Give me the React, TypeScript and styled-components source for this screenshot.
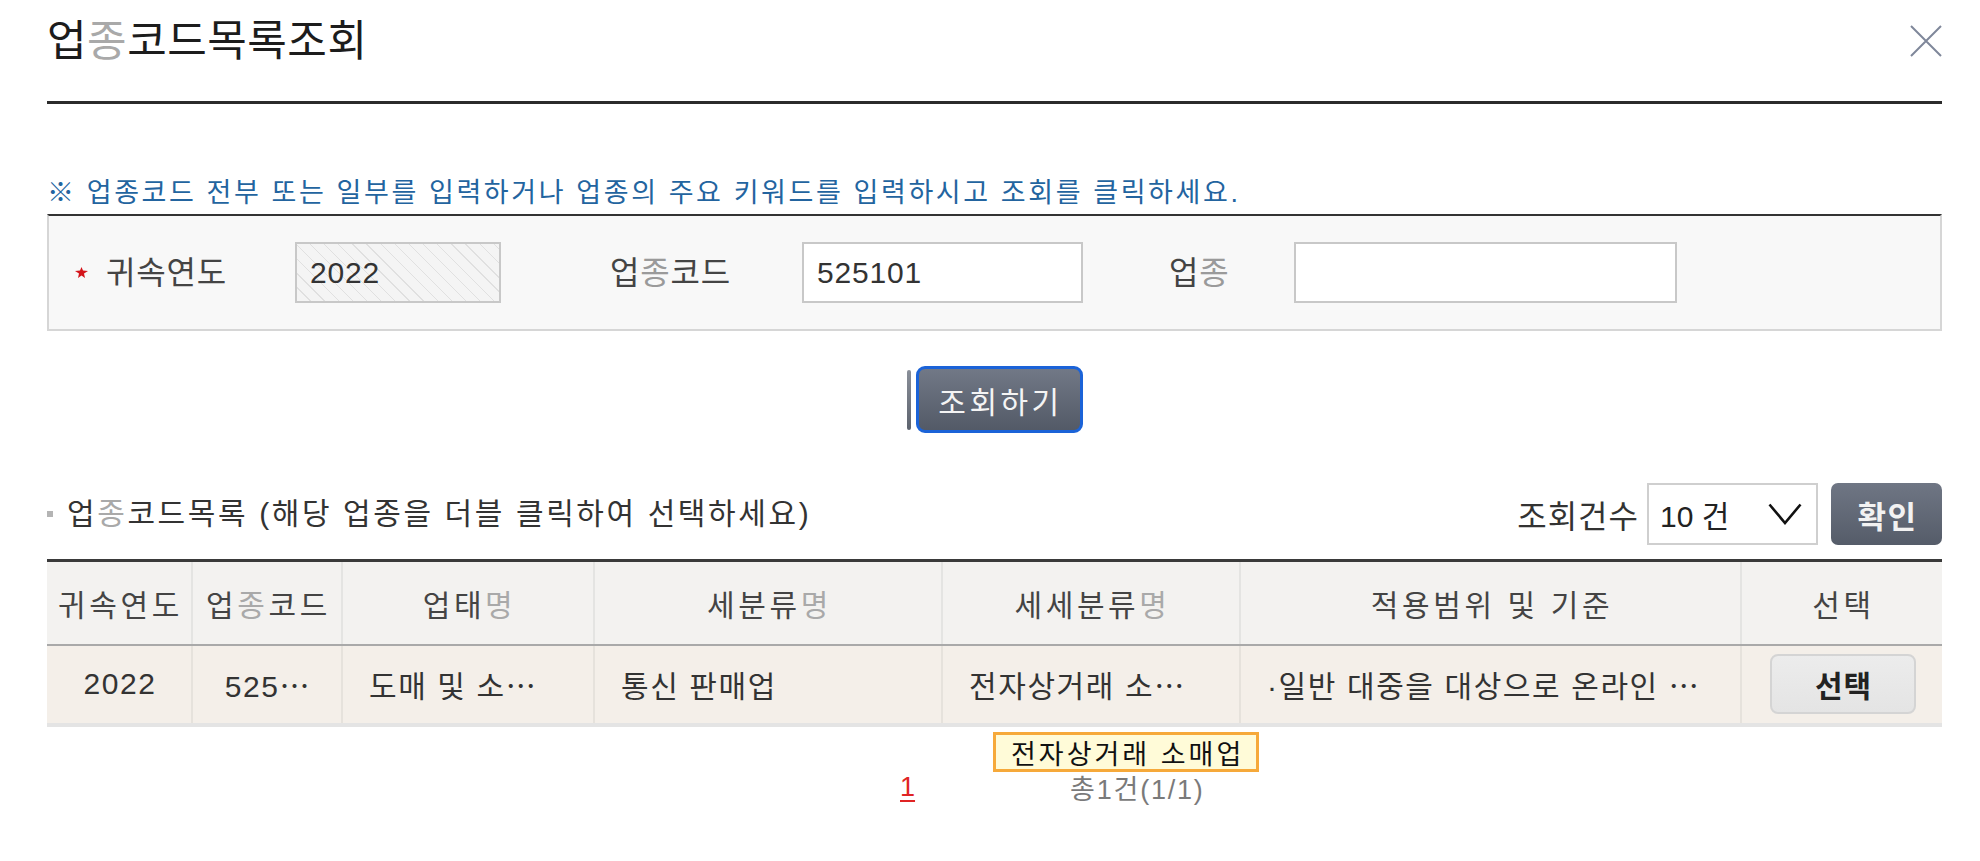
import React from "react";
import styled, { createGlobalStyle } from "styled-components";

const GlobalStyle = createGlobalStyle`
  html, body { margin: 0; padding: 0; background: #ffffff; }
  body {
    font-family: "Liberation Sans", "Noto Sans CJK KR", sans-serif;
    color: #333333;
  }
  * { box-sizing: border-box; }
`;

const Page = styled.div`
  width: 1895px;
  margin-left: 47px;
`;

const Header = styled.header`
  display: flex;
  justify-content: space-between;
  align-items: flex-start;
  height: 104px;
  padding-top: 16px;
  border-bottom: 3px solid #2b2b2b;
`;

const Title = styled.h1`
  margin: 0;
  font-size: 43px;
  line-height: 50px;
  font-weight: 400;
  letter-spacing: 0.5px;
  color: #1c1c1c;
`;

const Dim = styled.span<{ $tone?: string }>`
  color: ${(p) => p.$tone || "#a9a9a9"};
`;

const CloseButton = styled.button`
  display: flex;
  margin-top: 9px;
  padding: 0;
  border: 0;
  background: none;
  width: 32px;
  height: 32px;
  cursor: pointer;
`;

const Notice = styled.p`
  margin: 73px 0 5px;
  font-size: 27px;
  line-height: 32px;
  letter-spacing: 2.6px;
  color: #23649f;
  white-space: nowrap;
`;

const SearchBox = styled.div`
  display: flex;
  align-items: center;
  height: 117px;
  padding-left: 26px;
  background: #f8f8f8;
  border: 2px solid #d6d6d6;
  border-top: 2px solid #333333;
`;

const Star = styled.svg`
  flex: none;
  width: 13px;
  height: 11px;
  margin-right: 18px;
`;

const FieldLabel = styled.label<{ $w: number; $ml?: number }>`
  flex: none;
  width: ${(p) => p.$w}px;
  margin-left: ${(p) => p.$ml || 0}px;
  font-size: 32px;
  line-height: 40px;
  letter-spacing: 0.8px;
  color: #444444;
  white-space: nowrap;
`;

const TextInput = styled.input<{ $w: number; $locked?: boolean }>`
  flex: none;
  width: ${(p) => p.$w}px;
  height: 61px;
  padding: 0 0 0 13px;
  border: 2px solid #c8c8c8;
  font-family: "Liberation Sans", "Noto Sans CJK KR", sans-serif;
  font-size: 30px;
  letter-spacing: 0.8px;
  color: #333333;
  outline: none;
  background: ${(p) =>
    p.$locked
      ? "repeating-linear-gradient(45deg, #f4f4f4 0px, #f4f4f4 9px, #e0e0e0 9px, #e0e0e0 10px)"
      : "#ffffff"};
`;

const ButtonRow = styled.div`
  display: flex;
  justify-content: center;
  align-items: center;
  gap: 5px;
  margin-top: 35px;
  height: 67px;
`;

const Sliver = styled.span`
  width: 4px;
  height: 60px;
  border-radius: 2px;
  background: linear-gradient(#8a8f99, #5d636e);
`;

const PrimaryButton = styled.button`
  width: 167px;
  height: 67px;
  padding: 0 0 0 3px;
  border: 3px solid #1b63d8;
  border-radius: 9px;
  background: linear-gradient(#717886, #535a67);
  color: #f4f4f4;
  font-family: "Liberation Sans", "Noto Sans CJK KR", sans-serif;
  font-size: 30px;
  letter-spacing: 3.5px;
  cursor: pointer;
`;

const ListBar = styled.div`
  display: flex;
  justify-content: space-between;
  align-items: center;
  height: 62px;
  margin-top: 50px;
`;

const SectionTitle = styled.h2`
  display: flex;
  align-items: center;
  margin: 0;
  font-size: 30px;
  line-height: 36px;
  font-weight: 400;
  letter-spacing: 2.6px;
  color: #333333;
  white-space: nowrap;
`;

const Bullet = styled.span`
  width: 6px;
  height: 6px;
  margin-right: 14px;
  background: #b4b4b4;
`;

const Controls = styled.div`
  display: flex;
  align-items: center;
`;

const ControlLabel = styled.span`
  font-size: 32px;
  letter-spacing: 1px;
  color: #333333;
  margin-right: 8px;
`;

const SelectBox = styled.div`
  display: flex;
  align-items: center;
  justify-content: space-between;
  width: 171px;
  height: 62px;
  padding: 0 14px 0 11px;
  border: 2px solid #cfcfcf;
  background: #ffffff;
  font-size: 30px;
  color: #222222;
`;

const DarkButton = styled.button`
  width: 111px;
  height: 62px;
  margin-left: 13px;
  padding: 0 0 0 2px;
  border: 0;
  border-radius: 7px;
  background: linear-gradient(#6f7684, #555c69);
  color: #f2f2f2;
  font-family: "Liberation Sans", "Noto Sans CJK KR", sans-serif;
  font-size: 31px;
  font-weight: 700;
  letter-spacing: 1.5px;
  cursor: pointer;
`;

const TableWrap = styled.div`
  position: relative;
  margin-top: 14px;
`;

const Table = styled.table`
  width: 100%;
  table-layout: fixed;
  border-collapse: collapse;
  border-top: 3px solid #3a3a3a;
  border-bottom: 4px solid #e4e4e4;
`;

const HeadCell = styled.th`
  height: 84px;
  padding: 0 0 0 3px;
  background: #f3f2f0;
  border-left: 2px solid #e4e4e2;
  border-bottom: 2px solid #a9a9a9;
  font-size: 30px;
  font-weight: 400;
  letter-spacing: 3.6px;
  color: #444444;
  text-align: center;
  white-space: nowrap;
  &:first-child { border-left: 0; }
`;

const Cell = styled.td<{ $align?: "left" | "center" }>`
  height: 80px;
  padding: 0;
  padding-left: ${(p) => (p.$align === "left" ? "26px" : "2px")};
  background: #f4efe9;
  border-left: 2px solid #e6e2dc;
  font-size: 30px;
  letter-spacing: 1.6px;
  color: #333333;
  text-align: ${(p) => p.$align || "center"};
  white-space: nowrap;
  overflow: hidden;
  &:first-child { border-left: 0; }
`;

const PickButton = styled.button`
  width: 146px;
  height: 60px;
  padding: 0 0 0 1px;
  border: 2px solid #d4d4d4;
  border-radius: 8px;
  background: linear-gradient(#ececec, #e4e4e4);
  color: #222222;
  font-family: "Liberation Sans", "Noto Sans CJK KR", sans-serif;
  font-size: 30px;
  font-weight: 700;
  letter-spacing: 1px;
  cursor: pointer;
`;

const Tooltip = styled.div`
  position: absolute;
  top: 173px;
  left: 946px;
  height: 40px;
  padding: 0 12px 0 15px;
  display: flex;
  align-items: center;
  background: #fffbd8;
  border: 3px solid #f6a93a;
  font-size: 27px;
  letter-spacing: 3px;
  color: #111111;
  white-space: nowrap;
`;

const Pager = styled.div`
  display: flex;
  align-items: center;
  margin-top: 43px;
  padding-left: 853px;
  height: 36px;
`;

const PageLink = styled.a`
  font-size: 27px;
  color: #e02424;
  text-decoration: underline;
  text-underline-offset: 4px;
  cursor: pointer;
`;

const Total = styled.span`
  margin-left: 155px;
  font-size: 27px;
  letter-spacing: 1.8px;
  color: #7a7a7a;
`;

const columns = [145, 150, 252, 348, 298, 501, 201];

export default function App() {
  return (
    <>
      <GlobalStyle />
      <Page>
        <Header>
          <Title>
            업<Dim>종</Dim>코드목록조회
          </Title>
          <CloseButton aria-label="닫기">
            <svg width="32" height="32" viewBox="0 0 32 32">
              <path d="M1 1 L31 31 M31 1 L1 31" stroke="#7f879a" strokeWidth="2" fill="none" />
            </svg>
          </CloseButton>
        </Header>

        <Notice>※ 업종코드 전부 또는 일부를 입력하거나 업종의 주요 키워드를 입력하시고 조회를 클릭하세요.</Notice>

        <SearchBox>
          <Star viewBox="0 0 13 11">
            <path d="M6.5 0 L8 3.5 L13 4 L9 6.5 L10 11 L6.5 8.5 L3 11 L4 6.5 L0 4 L5 3.5 Z" fill="#d4141a" />
          </Star>
          <FieldLabel $w={189}>귀속연도</FieldLabel>
          <TextInput $w={206} $locked readOnly value="2022" />
          <FieldLabel $w={192} $ml={109}>
            업<Dim $tone="#9a9a9a">종</Dim>코드
          </FieldLabel>
          <TextInput $w={281} readOnly value="525101" />
          <FieldLabel $w={125} $ml={86}>
            업<Dim $tone="#9a9a9a">종</Dim>
          </FieldLabel>
          <TextInput $w={383} readOnly value="" />
        </SearchBox>

        <ButtonRow>
          <Sliver />
          <PrimaryButton>조회하기</PrimaryButton>
        </ButtonRow>

        <ListBar>
          <SectionTitle>
            <Bullet />
            업<Dim>종</Dim>코드목록 (해당 업종을 더블 클릭하여 선택하세요)
          </SectionTitle>
          <Controls>
            <ControlLabel>조회건수</ControlLabel>
            <SelectBox>
              <span>10 건</span>
              <svg width="34" height="22" viewBox="0 0 34 22">
                <path d="M1.5 1.5 L17 20 L32.5 1.5" stroke="#111111" strokeWidth="2.6" fill="none" />
              </svg>
            </SelectBox>
            <DarkButton>확인</DarkButton>
          </Controls>
        </ListBar>

        <TableWrap>
          <Table>
            <colgroup>
              {columns.map((w, i) => (
                <col key={i} style={{ width: w }} />
              ))}
            </colgroup>
            <thead>
              <tr>
                <HeadCell>귀속연도</HeadCell>
                <HeadCell>
                  업<Dim>종</Dim>코드
                </HeadCell>
                <HeadCell>
                  업태<Dim>명</Dim>
                </HeadCell>
                <HeadCell>
                  세분류<Dim>명</Dim>
                </HeadCell>
                <HeadCell>
                  세세분류<Dim>명</Dim>
                </HeadCell>
                <HeadCell>적용범위 및 기준</HeadCell>
                <HeadCell>선택</HeadCell>
              </tr>
            </thead>
            <tbody>
              <tr>
                <Cell>2022</Cell>
                <Cell>525⋯</Cell>
                <Cell $align="left">도매 및 소⋯</Cell>
                <Cell $align="left">통신 판매업</Cell>
                <Cell $align="left">전자상거래 소⋯</Cell>
                <Cell $align="left">·일반 대중을 대상으로 온라인 ⋯</Cell>
                <Cell>
                  <PickButton>선택</PickButton>
                </Cell>
              </tr>
            </tbody>
          </Table>
          <Tooltip>전자상거래 소매업</Tooltip>
        </TableWrap>

        <Pager>
          <PageLink>1</PageLink>
          <Total>총1건(1/1)</Total>
        </Pager>
      </Page>
    </>
  );
}
